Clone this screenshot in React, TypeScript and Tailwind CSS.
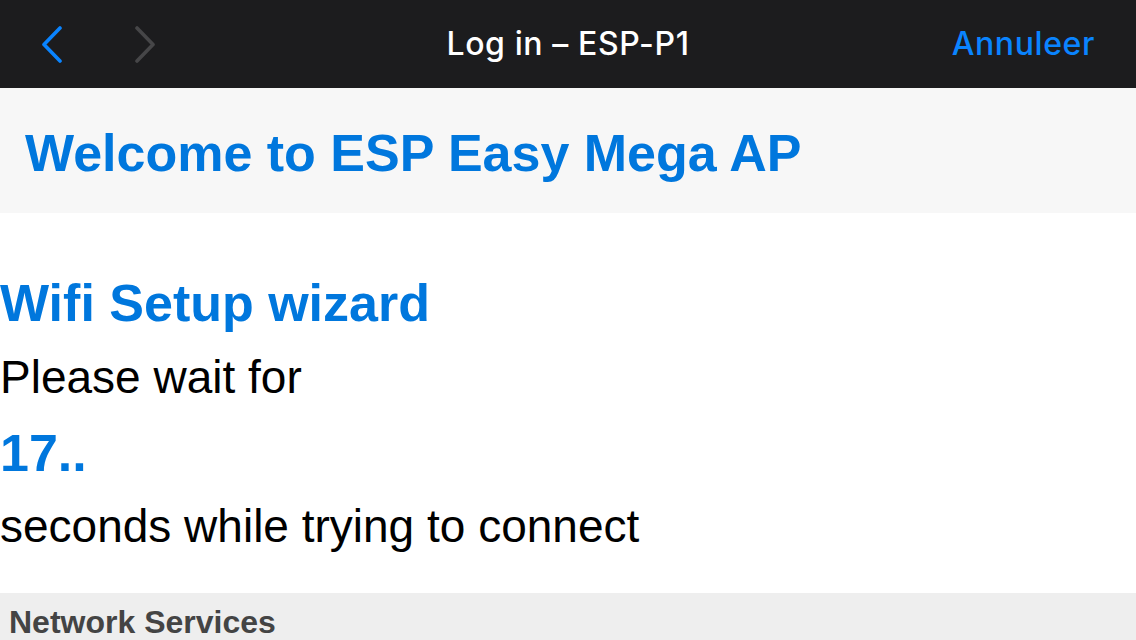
import React from "react";

const Chevron = ({ dir, color }: { dir: "left" | "right"; color: string }) => (
  <svg width="22" height="37" viewBox="0 0 22 37" fill="none">
    <polyline
      points={dir === "left" ? "19,2 3,18.5 19,35" : "3,2 19,18.5 3,35"}
      stroke={color}
      strokeWidth="3.6"
      strokeLinecap="round"
      strokeLinejoin="round"
    />
  </svg>
);

export default function App() {
  const helv = { fontFamily: '"Liberation Sans", Arial, Helvetica, sans-serif' };
  return (
    <div className="w-[1136px] h-[640px] overflow-hidden bg-white">
      <div
        className="grid grid-cols-[1fr_auto_1fr] items-center h-[88px] bg-[#1c1c1e]"
        style={{ fontFamily: 'Inter, "Noto Sans", sans-serif' }}
      >
        <div className="flex items-center pl-[41px] gap-[71px]">
          <Chevron dir="left" color="#0a84ff" />
          <Chevron dir="right" color="#464648" />
        </div>
        <div className="text-white text-[32px] font-medium tracking-[0.6px] leading-none pb-[1px]">
          Log in – ESP-P1
        </div>
        <div className="flex justify-end pr-[41px] text-[#0a84ff] text-[32px] font-medium tracking-[0.6px] leading-none pb-[1px]">
          Annuleer
        </div>
      </div>

      <div style={helv}>
        <div className="h-[125px] bg-[#f7f7f7] pt-[36px] pl-[25px]">
          <div className="text-[52px] leading-[58px] font-bold text-[#0077dd]">
            Welcome to ESP Easy Mega AP
          </div>
        </div>

        <div className="pt-[61px]">
          <div className="text-[52px] leading-[58px] font-bold text-[#0077dd]">
            Wifi Setup wizard
          </div>
          <div className="mt-[19px] text-[46px] leading-[52px] text-black">
            Please wait for
          </div>
          <div className="mt-[21px] text-[52px] leading-[58px] font-bold text-[#0077dd]">
            17..
          </div>
          <div className="mt-[18px] text-[46px] leading-[52px] text-black">
            seconds while trying to connect
          </div>
        </div>

        <div className="mt-[41px] bg-[#eeeeee] h-[60px] pt-[9px] pl-[9px]">
          <div className="text-[32px] leading-[40px] font-bold text-[#444444]">
            Network Services
          </div>
        </div>
      </div>
    </div>
  );
}
